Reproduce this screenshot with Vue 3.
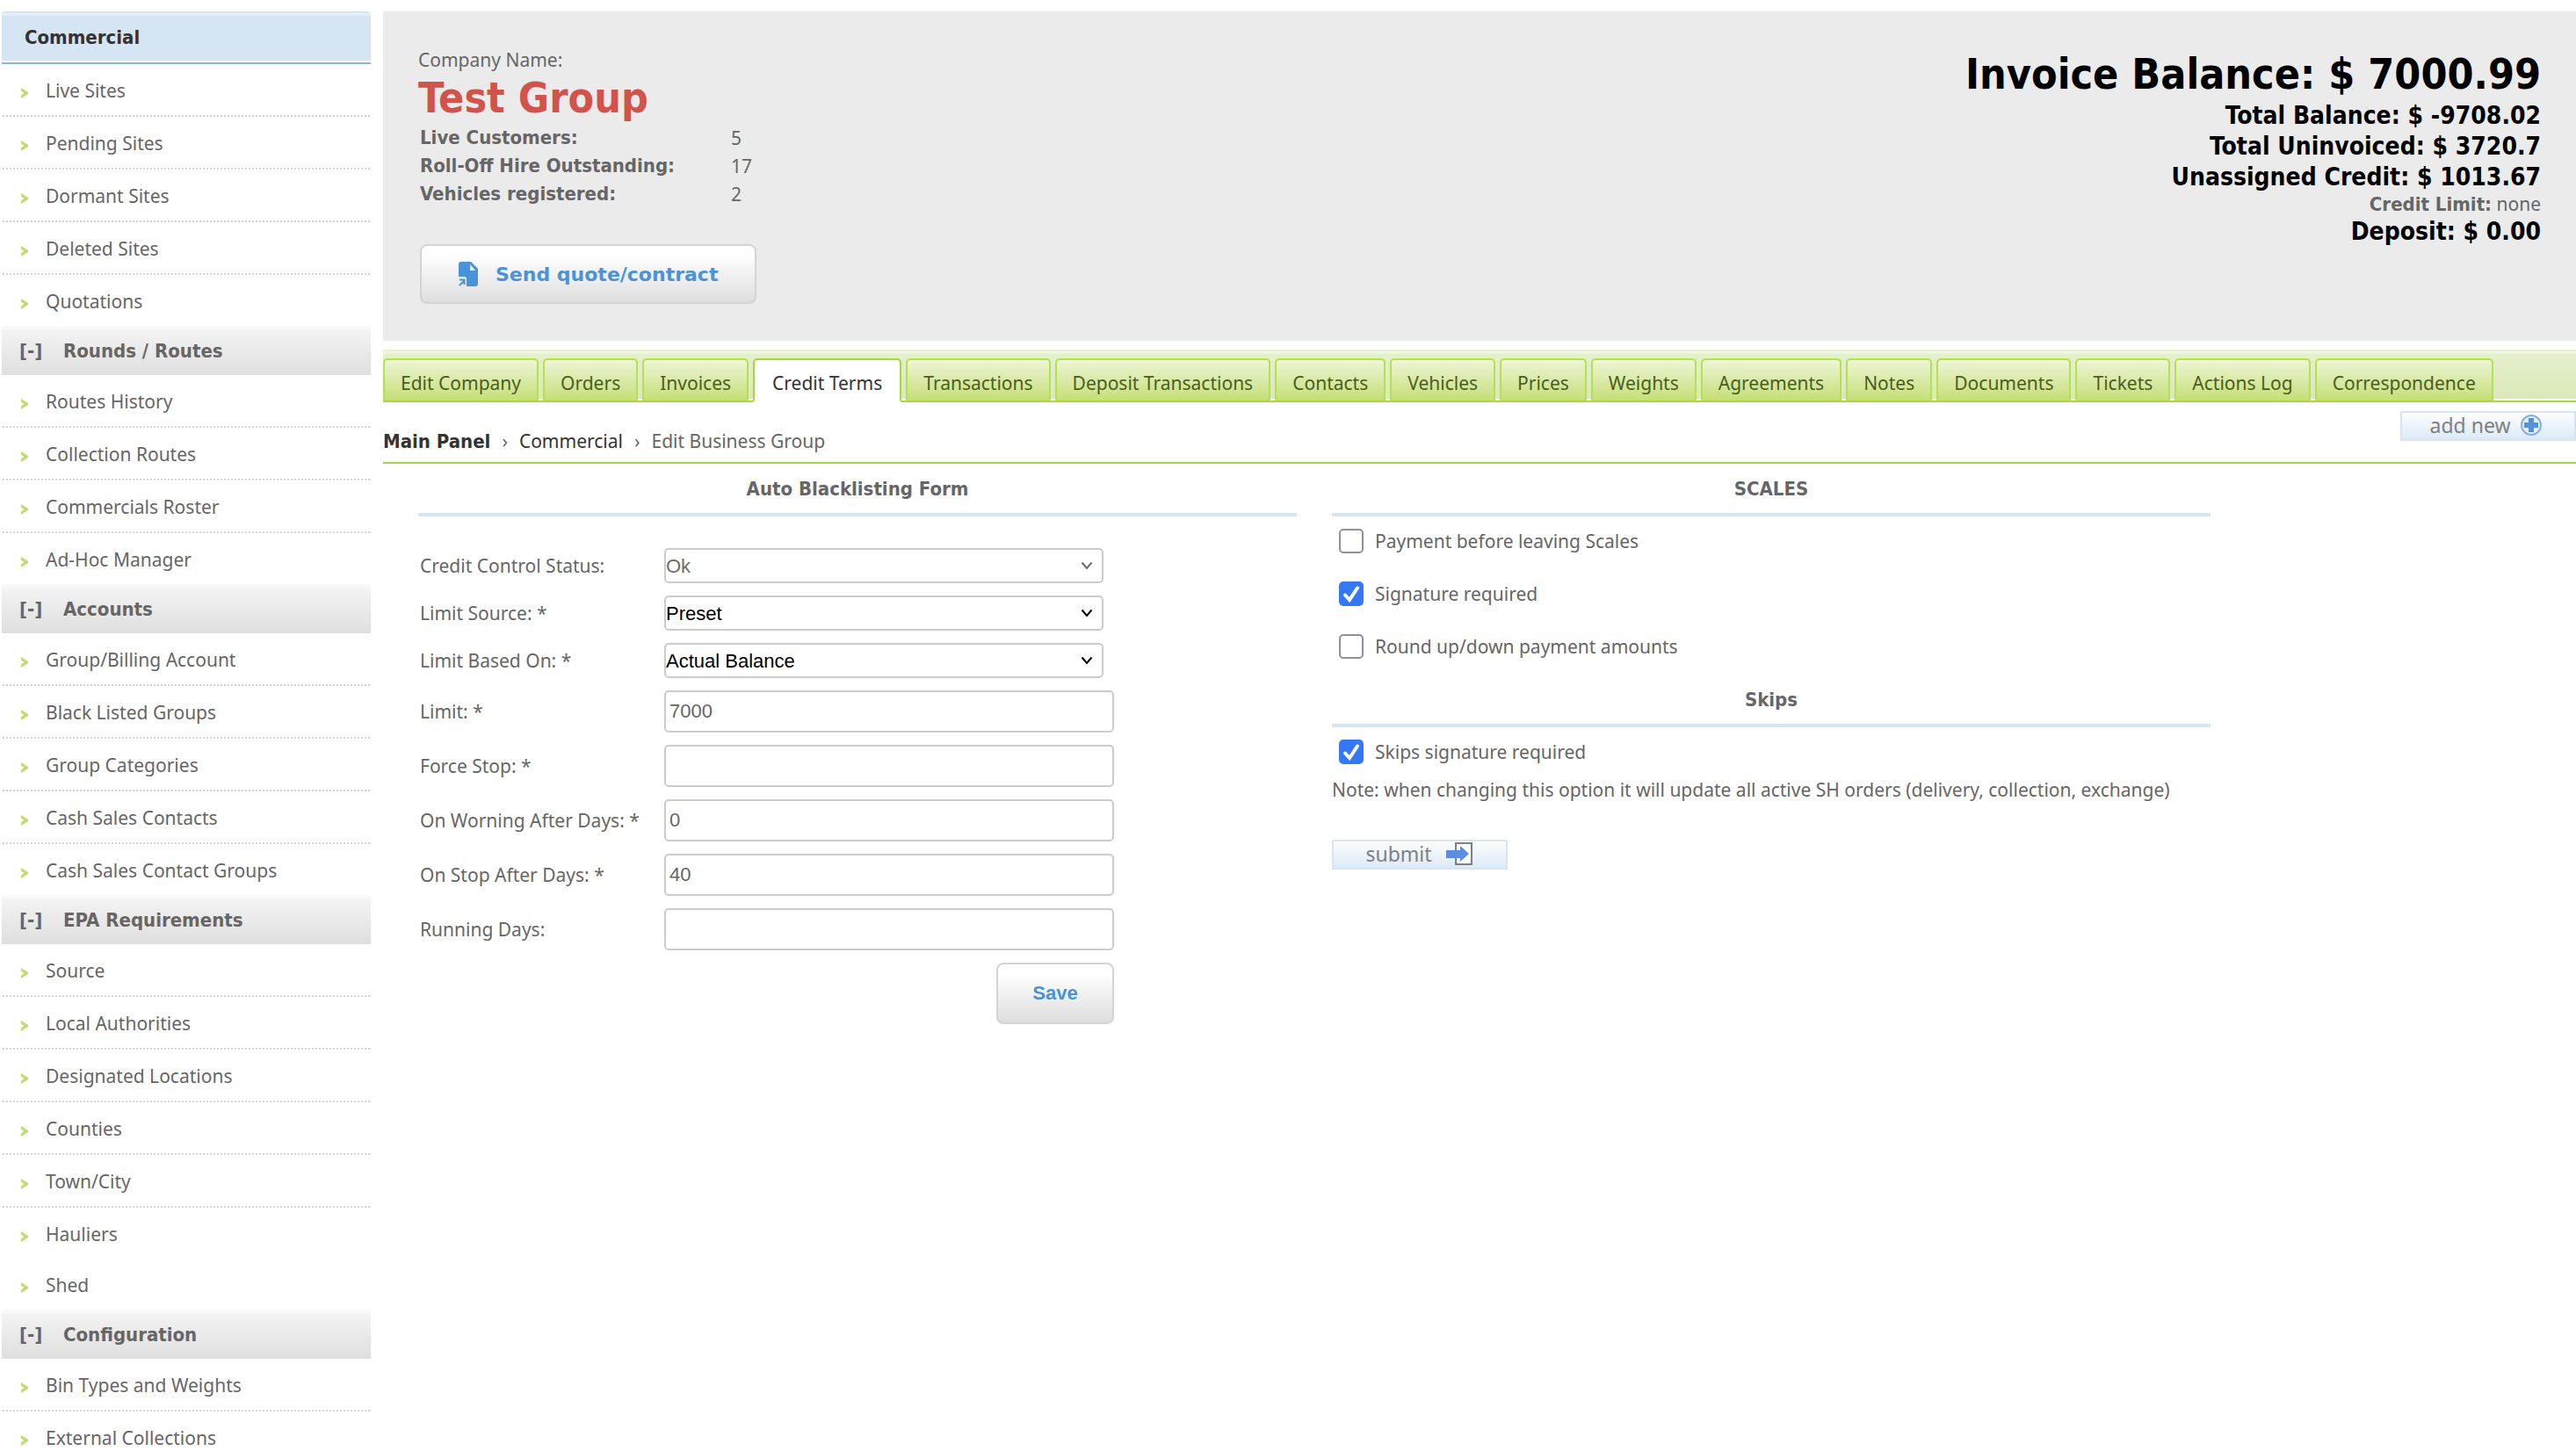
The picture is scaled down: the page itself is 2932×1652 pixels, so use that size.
<script setup>
import { ref } from 'vue'

const menu = [
  { title: 'Rounds / Routes', items: ['Routes History', 'Collection Routes', 'Commercials Roster', 'Ad-Hoc Manager'] },
  {
    title: 'Accounts',
    items: ['Group/Billing Account', 'Black Listed Groups', 'Group Categories', 'Cash Sales Contacts', 'Cash Sales Contact Groups'],
  },
  {
    title: 'EPA Requirements',
    items: ['Source', 'Local Authorities', 'Designated Locations', 'Counties', 'Town/City', 'Hauliers', 'Shed'],
    plainFrom: 5,
  },
  { title: 'Configuration', items: ['Bin Types and Weights', 'External Collections'] },
]
const topItems = ['Live Sites', 'Pending Sites', 'Dormant Sites', 'Deleted Sites', 'Quotations']
const groups = [{ title: '', items: topItems }, ...menu]

const stats = [
  ['Live Customers:', '5'],
  ['Roll-Off Hire Outstanding:', '17'],
  ['Vehicles registered:', '2'],
]

const tabs = [
  'Edit Company', 'Orders', 'Invoices', 'Credit Terms', 'Transactions', 'Deposit Transactions', 'Contacts', 'Vehicles',
  'Prices', 'Weights', 'Agreements', 'Notes', 'Documents', 'Tickets', 'Actions Log', 'Correspondence',
]
const activeTab = ref('Credit Terms')

const selects = [
  { id: 'status', label: 'Credit Control Status:', value: 'Ok', disabled: true },
  { id: 'source', label: 'Limit Source: *', value: 'Preset' },
  { id: 'basis', label: 'Limit Based On: *', value: 'Actual Balance' },
]
const fields = ref([
  { id: 'limit', label: 'Limit: *', value: '7000' },
  { id: 'force', label: 'Force Stop: *', value: '' },
  { id: 'warning', label: 'On Worning After Days: *', value: '0' },
  { id: 'stop', label: 'On Stop After Days: *', value: '40' },
  { id: 'running', label: 'Running Days:', value: '' },
])

const sections = ref([
  {
    title: 'SCALES',
    checks: [
      { id: 'payment', label: 'Payment before leaving Scales', on: false },
      { id: 'signature', label: 'Signature required', on: true },
      { id: 'round', label: 'Round up/down payment amounts', on: false },
    ],
  },
  { title: 'Skips', checks: [{ id: 'skips', label: 'Skips signature required', on: true }] },
])
</script>

<template>
  <div class="page">
    <nav class="sidebar">
      <h2 class="side-title">Commercial</h2>
      <template v-for="g in groups" :key="g.title">
        <h3 v-if="g.title" class="group-title"><span class="toggle">[-]</span>{{ g.title }}</h3>
        <ul class="side-list">
          <li v-for="(item, i) in g.items" :key="item" :class="{ dotted: i < (g.plainFrom ?? g.items.length - 1) }">
            <a href="#">
              <svg class="arrow" viewBox="0 0 8 12" aria-hidden="true"><path d="M0 0 8 5v2L0 12V8.500L3.500 6 0 3.500Z" /></svg>
              {{ item }}
            </a>
          </li>
        </ul>
      </template>
    </nav>

    <main class="main">
      <header class="summary">
        <div>
          <p class="company-label">Company Name:</p>
          <h1 class="company">Test Group</h1>
          <dl class="stats">
            <template v-for="[k, v] in stats" :key="k">
              <dt>{{ k }}</dt>
              <dd>{{ v }}</dd>
            </template>
          </dl>
          <button type="button" class="btn quote">
            <svg class="file" viewBox="0 0 22 28" aria-hidden="true">
              <path class="fill" d="M3 0h11l8 8v17q0 3-3 3H9v-8q0-3-3-3H0V3q0-3 3-3ZM13 3v7h6Z" fill-rule="evenodd" />
              <path class="edge" d="M1 27l5-5M1 20.500h5.500V26" />
            </svg>
            Send quote/contract
          </button>
        </div>
        <div class="balances">
          <p class="invoice">Invoice Balance: $ 7000.99</p>
          <p class="amount">Total Balance: $ -9708.02</p>
          <p class="amount">Total Uninvoiced: $ 3720.7</p>
          <p class="amount">Unassigned Credit: $ 1013.67</p>
          <p class="limit"><b>Credit Limit:</b> none</p>
          <p class="amount">Deposit: $ 0.00</p>
        </div>
      </header>

      <nav class="tabs">
        <a v-for="t in tabs" :key="t" href="#" class="tab" :class="{ active: t === activeTab }" @click.prevent="activeTab = t">{{ t }}</a>
      </nav>

      <div class="crumb-bar">
        <div class="crumbs">
          <a href="#" class="home">Main Panel</a><span>›</span><a href="#">Commercial</a><span>›</span>Edit Business Group
        </div>
        <a href="#" class="soft-btn add">
          add new
          <svg class="plus" viewBox="0 0 26 26" aria-hidden="true">
            <circle cx="13" cy="13" r="11" />
            <path d="M13 5v16M5 13h16" />
          </svg>
        </a>
      </div>

      <div class="columns">
        <form class="column" @submit.prevent>
          <h2 class="heading">Auto Blacklisting Form</h2>
          <div class="form-grid">
            <template v-for="s in selects" :key="s.id">
              <label :for="s.id">{{ s.label }}</label>
              <div class="select-wrap" :class="{ muted: s.disabled }">
                <select :id="s.id" :disabled="s.disabled"><option>{{ s.value }}</option></select>
                <svg class="chevron" viewBox="0 0 14 10" aria-hidden="true"><path d="M1.500 1.500 7 8l5.500-6.500" /></svg>
              </div>
            </template>
            <template v-for="f in fields" :key="f.id">
              <label :for="f.id">{{ f.label }}</label>
              <input :id="f.id" v-model="f.value" type="text" class="text">
            </template>
            <button type="submit" class="btn save">Save</button>
          </div>
        </form>

        <form class="column" @submit.prevent>
          <section v-for="s in sections" :key="s.title">
            <h2 class="heading">{{ s.title }}</h2>
            <label v-for="c in s.checks" :key="c.id" class="check" :for="c.id">
              <span class="box">
                <input :id="c.id" v-model="c.on" type="checkbox">
                <svg v-if="c.on" viewBox="0 0 28 28" aria-hidden="true"><path d="M7 15.500 12 21 21 7.500" /></svg>
              </span>
              {{ c.label }}
            </label>
          </section>
          <p class="note">Note: when changing this option it will update all active SH orders (delivery, collection, exchange)</p>
          <button type="submit" class="soft-btn">
            submit
            <svg class="enter" viewBox="0 0 32 28" aria-hidden="true">
              <rect x="11" y="2" width="18" height="24" />
              <path d="M0 10h16V5l10 9-10 9v-4H0Z" />
            </svg>
          </button>
        </form>
      </div>
    </main>
  </div>
</template>

<style>
html, body { height: 100%; overflow: hidden; background: #fff; }
</style>

<style scoped>
* { box-sizing: border-box; }
h1, h2, h3, p, ul, dl, dd { margin: 0; padding: 0; }
a { color: inherit; text-decoration: none; }

.page {
  display: flex;
  gap: 14px;
  padding: 13px 0 0 2px;
  font: 21px/28px "Noto Sans", sans-serif;
  color: #666;
}
h1, h2, h3, b, dt, .home, .invoice, .amount { font-family: "DejaVu Sans Condensed", "DejaVu Sans", sans-serif; font-weight: 700; }

.sidebar { flex: 0 0 420px; }
.side-title {
  height: 60px;
  padding-left: 26px;
  font-size: 22px;
  line-height: 60px;
  color: #333;
  border-bottom: 2px solid #8ab5d6;
  background: linear-gradient(#d5e5f4 2px, #e8f1f9 2px, #e0ecf7 5px, #d5e5f4 5px, #d5e5f4 56px, #fff 56px);
  border-radius: 4px 4px 0 0;
}
.group-title {
  display: flex;
  height: 56px;
  padding-left: 20px;
  font-size: 22px;
  line-height: 58px;
  background: linear-gradient(#f8f8f8 4px, #f3f3f3 5px, #dfdfdf);
}
.toggle { width: 50px; }
.side-list { list-style: none; }
.side-list a { display: flex; align-items: center; height: 58px; padding: 2px 0 0 22px; }
.dotted::after {
  content: "";
  display: block;
  height: 2px;
  margin: 0 1px;
  background: repeating-linear-gradient(90deg, #d2d2d2 0 2px, #fff 2px 4px);
}
.arrow { width: 8px; height: 12px; margin: 6px 20px 0 0; fill: #bfdd6b; }

.main { flex: 1; min-width: 0; }
.summary {
  display: flex;
  justify-content: space-between;
  min-height: 375px;
  padding: 41px 40px 0;
  background: #ebebeb;
}
.company { font-size: 48px; line-height: 59px; color: #d2534c; }
.stats { display: grid; grid-template-columns: 354px auto; justify-content: start; padding-left: 2px; line-height: 32px; }
dt { font-size: 22px; }
.btn {
  border: 2px solid #d4d4d4;
  border-radius: 8px;
  color: #4b93d8;
  font-weight: 700;
  background: linear-gradient(#fff 15%, #dedede);
}
.quote {
  display: flex;
  align-items: center;
  gap: 20px;
  height: 68px;
  margin: 41px 0 0 2px;
  padding: 0 42px;
  font-family: "DejaVu Sans", sans-serif;
  font-size: 22px;
}
.file { width: 22px; height: 28px; }
.fill { fill: #4b93d8; }
.edge { fill: none; stroke: #4b93d8; stroke-width: 2; }

.balances { text-align: right; }
.invoice { font-size: 48px; line-height: 60px; color: #000; }
.amount { font-size: 28px; line-height: 35px; color: #000; }
.limit { line-height: 27px; }
.limit b { font-size: 22px; line-height: 27px; }

.tabs {
  display: flex;
  gap: 5px;
  height: 60px;
  margin-top: 10px;
  padding-top: 10px;
  background: linear-gradient(#e6f2cc 2px, #f1f8e2 2px, #f1f8e2 4px, #e5f0cd 5px, #dbe8b9 56px, #fff 56px, #fff 58px, #a5d741 58px);
}
.tab {
  height: 50px;
  padding: 0 18px;
  line-height: 52px;
  color: #4b5e20;
  border: 2px solid #b4e152;
  border-bottom-color: #a5d741;
  border-radius: 5px 5px 0 0;
  background: linear-gradient(#edf6d6, #c5df75);
}
.tab.active { padding: 0 20px; color: #333; background: #fff; border-color: #a5d741; border-bottom-color: #fff; }

.crumb-bar {
  display: flex;
  justify-content: space-between;
  height: 70px;
  border-bottom: 2px solid #a5d741;
}
.crumbs { padding-top: 30px; }
.crumbs a { color: #333; }
.crumbs span { margin: 0 13px; }
.crumbs .home { font-size: 22px; }
.soft-btn {
  display: flex;
  align-items: center;
  justify-content: center;
  width: 200px;
  height: 34px;
  padding: 0 0 2px;
  font: 23px/28px "Noto Sans", sans-serif;
  color: #808080;
  border: 2px solid #d5e5f2;
  background: linear-gradient(#fcfdfe, #dceaf6);
}
.add { gap: 11px; margin-top: 10px; padding-right: 4px; }
.plus { width: 26px; height: 26px; fill: #e6f0fb; stroke: #7fb0e8; stroke-width: 2; }
.plus path { stroke: #5592de; stroke-width: 6; }

.columns { display: flex; gap: 40px; padding-left: 40px; }
.column { flex: 0 1 1000px; }
.heading {
  height: 60px;
  font-size: 22px;
  line-height: 58px;
  text-align: center;
  border-bottom: 4px solid #d5e5f4;
}
.form-grid {
  display: grid;
  grid-template-columns: 278px 512px;
  row-gap: 14px;
  align-items: center;
  padding: 36px 0 0 2px;
}
.select-wrap { position: relative; width: 500px; height: 40px; color: #000; }
.muted { color: #6d6d6d; }
select, .text {
  border: 2px solid #ccc;
  border-radius: 5px;
  background: #fff;
  font: 22px "Liberation Sans", Arial, sans-serif;
}
select { appearance: none; width: 100%; height: 40px; padding: 0; color: inherit; opacity: 1; }
.chevron {
  position: absolute;
  right: 12px;
  top: 15px;
  width: 14px;
  height: 10px;
  fill: none;
  stroke: currentColor;
  stroke-width: 2;
  pointer-events: none;
}
.text { width: 100%; height: 48px; padding: 0 4px; color: #666; }
.save {
  grid-column: 2;
  justify-self: end;
  width: 134px;
  height: 70px;
  font-family: "Liberation Sans", Arial, sans-serif;
  font-size: 22px;
}

.check { display: flex; align-items: center; gap: 13px; height: 60px; padding: 0 0 4px 8px; }
.box { position: relative; width: 28px; height: 28px; }
.box input {
  appearance: none;
  display: block;
  width: 28px;
  height: 28px;
  margin: 0;
  border: 2px solid #8f8f9d;
  border-radius: 5px;
  background: #fff;
}
.box input:checked { background: #3478f6; border-color: #3478f6; }
.box svg { position: absolute; inset: 0; fill: none; stroke: #fff; stroke-width: 4; stroke-linecap: round; pointer-events: none; }
.note { margin-bottom: 46px; line-height: 22px; }
.enter { width: 32px; height: 28px; margin-left: 16px; }
.enter rect { fill: #fff; stroke: #808080; stroke-width: 2; }
.enter path { fill: #5b8de0; }
</style>
